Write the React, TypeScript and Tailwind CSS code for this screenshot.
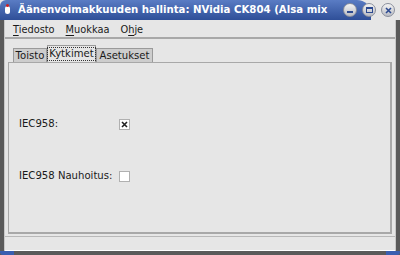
import React from "react";

function TitleButton({ kind }: { kind: "min" | "max" | "close" }) {
  return (
    <div className="w-[14px] h-[14px] rounded-full bg-gradient-to-b from-[#f4f4f4] to-[#b9bcc4] border border-[#8a8f9c] flex items-center justify-center">
      {kind === "min" && <div className="w-[6px] h-[2px] bg-[#2c4a90] mt-[4px]" />}
      {kind === "max" && <div className="w-[7px] h-[6px] border border-[#2c4a90] border-t-2" />}
      {kind === "close" && (
        <svg width="7" height="7" viewBox="0 0 7 7">
          <path d="M1 1 L6 6 M6 1 L1 6" stroke="#2c4a90" strokeWidth="1.6" />
        </svg>
      )}
    </div>
  );
}

function MenuItem({ first, rest }: { first: string; rest: string }) {
  return (
    <span>
      <span className="underline underline-offset-2">{first}</span>
      {rest}
    </span>
  );
}

function Checkbox({ checked }: { checked: boolean }) {
  return (
    <div className="w-[11px] h-[11px] bg-white border border-[#b0b0b0] flex items-center justify-center">
      {checked && (
        <svg width="7" height="7" viewBox="0 0 7 7">
          <path d="M1 1 L6 6 M6 1 L1 6" stroke="#222" strokeWidth="1.6" />
        </svg>
      )}
    </div>
  );
}

export default function App() {
  return (
    <div
      className="w-[400px] h-[255px] bg-[#e6e6e6] flex flex-col overflow-hidden text-[#1a1a1a]"
      style={{ fontFamily: '"DejaVu Sans", sans-serif' }}
    >
      {/* title bar */}
      <div className="h-[20px] flex items-center bg-[#e6e6e6] shrink-0">
        <div className="flex-1 h-full flex items-center rounded-tl-[6px] rounded-tr-[14px] bg-gradient-to-b from-[#5a7cc4] to-[#2f4f98] pl-[5px] overflow-hidden">
          <div className="w-[5px] h-[8px] bg-white rounded-sm mr-[8px] relative">
            <div className="absolute -top-[2px] left-[1px] w-[3px] h-[3px] bg-[#d02020] rounded-full" />
          </div>
          <span className="text-white font-bold text-[10.2px] whitespace-nowrap">
            Äänenvoimakkuuden hallinta: NVidia CK804 (Alsa mix
          </span>
        </div>
        <div className="flex items-center gap-[5px] pr-[5px] pl-[2px] -ml-[30px]">
          <TitleButton kind="min" />
          <TitleButton kind="max" />
          <TitleButton kind="close" />
        </div>
      </div>

      {/* body with frame */}
      <div className="flex-1 flex border-x-[4px] border-[#5a5a5a]">
        <div className="flex-1 flex flex-col border-x border-[#c8c8c8]">
          {/* menu bar */}
          <div className="h-[19px] flex items-center gap-[11px] px-[8px] pt-[4px] text-[9.8px] border-b-2 border-[#a8a8a8]">
            <MenuItem first="T" rest="iedosto" />
            <MenuItem first="M" rest="uokkaa" />
            <span>
              O<span className="underline underline-offset-2">h</span>je
            </span>
          </div>

          {/* tabs */}
          <div className="flex-1 flex flex-col px-[3px] pt-[6px] pb-[2px]">
            <div className="flex items-end pl-[5px] text-[10.1px] h-[17px]">
              <div className="h-[14px] w-[34px] justify-center bg-[#cdcdcd] border border-b-0 border-[#9a9a9a] flex items-center">
                Toisto
              </div>
              <div className="h-[17px] w-[49px] justify-center bg-[#e6e6e6] border border-b-0 border-[#9a9a9a] flex items-center">
                <span className="border border-dotted border-[#333] px-[1px] leading-[12px]">Kytkimet</span>
              </div>
              <div className="h-[14px] w-[57px] justify-center bg-[#cdcdcd] border border-b-0 border-[#9a9a9a] flex items-center">
                Asetukset
              </div>
            </div>
            <div className="flex-1 border border-[#a8a8a8] border-r-2 border-b-2 flex flex-col text-[10.1px] pl-[10px]">
              <div className="h-[55px]" />
              <div className="flex items-center h-[12px]">
                <span className="w-[100px] whitespace-nowrap">IEC958:</span>
                <Checkbox checked />
              </div>
              <div className="h-[40px]" />
              <div className="flex items-center h-[12px]">
                <span className="w-[100px] whitespace-nowrap">IEC958 Nauhoitus:</span>
                <Checkbox checked={false} />
              </div>
            </div>
          </div>

          {/* status bar */}
          <div className="h-[15px] border-t border-[#b8b8b8] border-b border-b-white" />
        </div>
      </div>

      {/* bottom frame */}
      <div className="h-[4px] shrink-0 flex bg-[#5a5a5a]">
        <div className="w-[14px] bg-[#3a5eb0] rounded-bl-[3px]" />
        <div className="flex-1" />
        <div className="w-[14px] bg-[#3a5eb0] rounded-br-[3px]" />
      </div>
    </div>
  );
}
